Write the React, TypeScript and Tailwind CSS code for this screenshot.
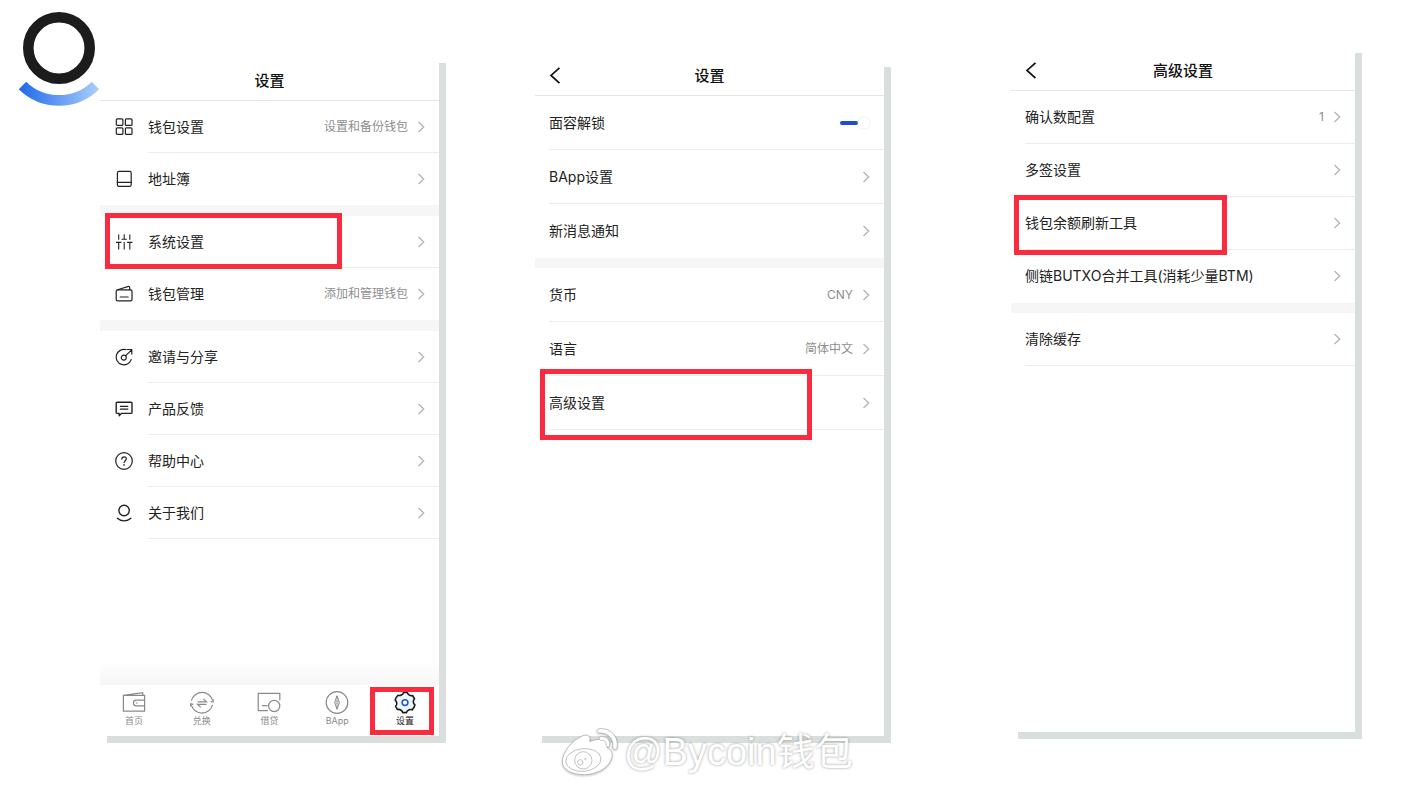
import { useState } from 'react';
import type { ReactNode } from 'react';
import clsx from 'clsx';

interface Row {
  label: string;
  value?: string;
  icon?: ReactNode;
  // position of the red marker around the row
  mark?: string;
}

const Icon = ({ children }: { children: ReactNode }) => (
  <svg
    viewBox="0 0 18 18"
    className="w-[18px] h-[18px] shrink-0 text-[#222]"
    fill="none"
    stroke="currentColor"
    strokeWidth="1.2"
    strokeLinecap="round"
    strokeLinejoin="round"
    aria-hidden="true"
  >
    {children}
  </svg>
);

const GridIcon = () => (
  <Icon>
    <rect x="1.3" y="0.8" width="6.6" height="6.6" rx="1" />
    <rect x="10.4" y="0.8" width="6.6" height="6.6" rx="1" />
    <rect x="1.3" y="9.8" width="6.6" height="6.6" rx="1" />
    <rect x="10.4" y="9.8" width="6.6" height="6.6" rx="1" />
  </Icon>
);

const BookIcon = () => (
  <Icon>
    <rect x="2.4" y="1.4" width="13.8" height="15" rx="1.6" />
    <path d="M2.4 12.4h13.8" />
  </Icon>
);

const SlidersIcon = () => (
  <Icon>
    <g strokeWidth="1.1" strokeLinecap="butt">
      <path d="M3.7 1.4v5.4M1 9.4h5.4M3.7 9.4v7M9.2 1.2v4.6M6.5 6.2h5.4M9.2 9v7.4M14.8 1.4v5.4M12.1 9.4h5.4M14.8 9.4v7" />
    </g>
  </Icon>
);

const WalletIcon = () => (
  <Icon>
    <rect x="1.2" y="4.8" width="15.8" height="11" rx="1.4" />
    <path d="M2.6 4.8l10.8-3.4c.6-.2 1 .1 1.1.6l.5 2.8M5.2 12h8" />
  </Icon>
);

const ShareIcon = () => (
  <Icon>
    <path d="M11 1.7A7.7 7.7 0 1 0 16.2 11.6" />
    <circle cx="8.8" cy="9.6" r="2.5" />
    <path d="M10.7 7.7l5.9-5.9M12.2 1.5h4.6v4.6" />
  </Icon>
);

const FeedbackIcon = () => (
  <Icon>
    <path
      d="M2.2 2.2h13.8c.6 0 1 .4 1 1v9.2c0 .6-.4 1-1 1H6.4L4.2 15.800v-2.400h-2c-.6 0-1-.4-1-1V3.200c0-.6.4-1 1-1z"
      strokeWidth="1.4"
    />
    <path d="M5.4 6.400h7.400M5.400 9.200h7.400" />
  </Icon>
);

const HelpIcon = () => (
  <Icon>
    <circle cx="9" cy="9" r="8.300" />
    <path d="M6.800 7.100c.1-1.400 1-2.200 2.300-2.200s2.200.8 2.200 2c0 1.700-2.200 1.900-2.200 3.700" />
    <circle cx="9.100" cy="12.900" r="0.300" />
  </Icon>
);

const AboutIcon = () => (
  <Icon>
    <circle cx="9.100" cy="6.500" r="5.200" strokeWidth="1.400" />
    <path d="M2.300 14.200c4 3.500 9.600 3.500 13.600 0" strokeWidth="1.400" />
  </Icon>
);

const Chevron = () => (
  <svg viewBox="0 0 8 12" className="w-2 h-3 shrink-0" fill="none" stroke="#b4b4b4" strokeWidth="1.3" aria-hidden="true">
    <path d="M1.5 1l5.2 5-5.2 5" />
  </svg>
);

const TabIcon = ({ children }: { children: ReactNode }) => (
  <svg viewBox="0 0 24 24" className="w-6 h-6" fill="none" stroke="#8a8a8a" strokeWidth="1.2" aria-hidden="true">
    {children}
  </svg>
);

const tabs: { label: string; icon: ReactNode; mark?: string }[] = [
  {
    label: '首页',
    icon: (
      <TabIcon>
        <path d="M1.4 4.4h21.2v15.8H1.4zM1.4 4.4l19.2-2.8.4 2.8M22.6 9.2h-8.4a2.8 2.8 0 0 0 0 5.6h8.4" />
        <path d="M14 12h1.6" />
      </TabIcon>
    ),
  },
  {
    label: '兑换',
    icon: (
      <TabIcon>
        <path d="M1.4 9.7A11 11 0 0 1 22.7 9.7M22.6 13.8A11 11 0 0 1 1.3 13.8" />
        <path d="M20.5 10.5l2.6.6.5-2.6M3.5 13.3l-2.7-.6-.4 2.5M7.5 10.9h9l-3.3-3M16.5 13.4h-9l3.3 3" />
      </TabIcon>
    ),
  },
  {
    label: '借贷',
    icon: (
      <TabIcon>
        <path d="M11 19.6H1.2V2.4h21.6v7.2M5 14.6h5.6" />
        <circle cx="17.2" cy="15" r="5.6" />
      </TabIcon>
    ),
  },
  {
    label: 'BApp',
    icon: (
      <TabIcon>
        <circle cx="12" cy="11.5" r="10.8" />
        <path d="M12 4.8l2.4 6.7-2.4 6.7-2.4-6.7z" strokeWidth="1" />
        <path d="M12 4.8v5.4M12 13v5.2" strokeWidth="0.8" />
        <circle cx="12" cy="11.5" r="1.1" strokeWidth="0.8" />
      </TabIcon>
    ),
  },
  {
    label: '设置',
    mark: 'top-0.5 bottom-px -left-px right-[5px]',
    icon: (
      <TabIcon>
        <path
          d="M9 1.7c1.6 1.7 4.400 1.700 6 0l3.300 1.800c-.6 2.400.9 4.800 3.500 5.200.5 2 .5 4 0 5.600-2.600.4-4.100 2.800-3.500 5.200L15 21.400c-1.600-1.700-4.400-1.700-6 0l-3.300-1.900c.6-2.400-.9-4.800-3.500-5.200-.5-1.600-.5-3.600 0-5.600 2.600-.4 4.100-2.800 3.500-5.200z"
          transform="rotate(30 12 11.6)"
          fill="#eef5ff"
          stroke="#1c1c1c"
          strokeWidth="1.6"
          strokeLinejoin="round"
        />
        <circle cx="12" cy="11.6" r="2.9" fill="#fff" stroke="#2158d0" strokeWidth="1.6" />
      </TabIcon>
    ),
  },
];

const Marker = ({ className }: { className: string }) => (
  <span className={clsx('absolute z-10 border-5 border-[#fb2b3f] pointer-events-none', className)} aria-hidden="true" />
);

const Phone = ({ className, children }: { className: string; children: ReactNode }) => (
  <section className={clsx('relative flex flex-col min-w-0 basis-0 bg-white shadow-[7px_7px_0_#d9dfdd]', className)}>
    {children}
  </section>
);

const TitleBar = ({ title, back, className }: { title: string; back?: boolean; className: string }) => (
  <header className={clsx('relative flex items-center justify-center border-b border-[#e4e4e4]', className)}>
    {back && (
      <button type="button" aria-label="返回" className="absolute left-3.5">
        <svg viewBox="0 0 12 18" className="w-3 h-[18px]" fill="none" stroke="#111" strokeWidth="1.7" aria-hidden="true">
          <path d="M10.5 0.8L2 8.400l8.500 7.800" />
        </svg>
      </button>
    )}
    <h1 className="text-[15px] leading-5 font-medium text-[#111]">{title}</h1>
  </header>
);

const Band = ({ className }: { className: string }) => <div className={clsx('bg-[#f6f6f6]', className)} />;

interface RowListProps {
  rows: Row[];
  height: string;
  // keep the divider under the last row
  closed?: boolean;
}

const RowList = ({ rows, height, closed }: RowListProps) => (
  <ul>
    {rows.map((row, i) => (
      <li key={row.label} className={clsx('relative', height)}>
        <button
          type="button"
          className={clsx('flex items-center w-full h-full text-left', row.icon ? 'pl-[15px] gap-[15px]' : 'pl-3.5')}
        >
          {row.icon}
          <span
            className={clsx(
              'flex flex-1 items-center gap-[9px] h-full pr-3.5 border-b',
              closed || i < rows.length - 1 ? 'border-[#ececec]' : 'border-transparent'
            )}
          >
            <span className="flex-1 text-sm text-[#222] whitespace-nowrap">{row.label}</span>
            {row.value && <span className="text-xs text-[#8e8e8e]">{row.value}</span>}
            <Chevron />
          </span>
        </button>
        {row.mark && <Marker className={row.mark} />}
      </li>
    ))}
  </ul>
);

const walletRows: Row[] = [
  { label: '钱包设置', value: '设置和备份钱包', icon: <GridIcon /> },
  { label: '地址簿', icon: <BookIcon /> },
];

const systemRows: Row[] = [
  { label: '系统设置', icon: <SlidersIcon />, mark: '-top-[3px] -bottom-px left-[5px] right-[97px]' },
  { label: '钱包管理', value: '添加和管理钱包', icon: <WalletIcon /> },
];

const aboutRows: Row[] = [
  { label: '邀请与分享', icon: <ShareIcon /> },
  { label: '产品反馈', icon: <FeedbackIcon /> },
  { label: '帮助中心', icon: <HelpIcon /> },
  { label: '关于我们', icon: <AboutIcon /> },
];

const appRows: Row[] = [{ label: 'BApp设置' }, { label: '新消息通知' }];

const localeRows: Row[] = [
  { label: '货币', value: 'CNY' },
  { label: '语言', value: '简体中文' },
  { label: '高级设置', mark: '-top-[7px] -bottom-2.5 left-[5px] right-[72px]' },
];

const advancedRows: Row[] = [
  { label: '确认数配置', value: '1' },
  { label: '多签设置' },
  { label: '钱包余额刷新工具', mark: '-top-0.5 -bottom-[5px] left-[3px] right-32' },
  { label: '侧链BUTXO合并工具(消耗少量BTM)' },
];

const cacheRows: Row[] = [{ label: '清除缓存' }];

const Logo = () => (
  <svg viewBox="18 10 82 98" className="w-[82px] h-[98px]" fill="none" role="img" aria-label="Bycoin">
    <defs>
      <linearGradient id="smile" x1="19" y1="90" x2="99" y2="90" gradientUnits="userSpaceOnUse">
        <stop offset="0" stopColor="#1f69e8" />
        <stop offset="1" stopColor="#abcffc" />
      </linearGradient>
    </defs>
    <circle cx="59" cy="48" r="30.7" stroke="#1c1c1c" strokeWidth="10.6" />
    <path d="M22.5 85.4A52 52 0 0 0 95.5 85.4" stroke="url(#smile)" strokeWidth="10.6" />
  </svg>
);

const Watermark = () => (
  <div className="absolute left-[560px] top-[726px] flex items-center gap-1 pointer-events-none">
    <svg
      viewBox="90 75 180 156"
      className="w-[60px] h-[52px] drop-shadow-[0_1px_1px_rgba(0,0,0,0.25)]"
      fill="#fff"
      stroke="#a5a5a5"
      strokeWidth="2"
      strokeLinejoin="round"
      aria-hidden="true"
    >
      <path d="M97 182c0-28 30-66 62-78 16-5 24 2 20 18 16-7 36-10 48-4 8 5 8 14 4 22 14 6 18 18 14 32-8 28-44 49-82 49-36 0-66-14-66-39z" />
      <ellipse cx="160" cy="177" rx="53" ry="34" transform="rotate(-6 160 177)" />
      <circle cx="160" cy="178" r="26" />
      <circle cx="151" cy="184" r="8" />
      <circle cx="166" cy="174" r="2" />
      <path d="M206 84c32-6 62 22 55 56-1 8-13 7-13-2 4-24-15-44-40-42-8 0-9-10-2-12z" />
      <path d="M212 107c16-3 30 10 27 26-1 7-12 6-11-1 1-9-6-16-15-14-7 1-8-9-1-11z" />
    </svg>
    <span className="text-[38px] leading-[48px] text-white whitespace-nowrap font-['Liberation_Sans','Noto_Sans_CJK_SC',sans-serif] [text-shadow:0_0_3px_rgba(0,0,0,0.4)]">
      @Bycoin钱包
    </span>
  </div>
);

export default function App() {
  const [faceUnlock, setFaceUnlock] = useState(true);
  const [activeTab, setActiveTab] = useState('设置');

  return (
    <main className="relative flex items-start min-h-screen pr-[63px] overflow-hidden bg-white font-[Inter,'Noto_Sans_CJK_SC',sans-serif]">
      <div className="w-[100px] shrink-0 pl-[18px] pt-2.5">
        <Logo />
      </div>

      <Phone className="grow-[339] mt-14 min-h-[680px]">
        <TitleBar title="设置" className="h-[45px] pt-1.5" />
        <RowList rows={walletRows} height="h-[52px]" />
        <Band className="h-[11px]" />
        <RowList rows={systemRows} height="h-[52px]" />
        <Band className="h-[11px]" />
        <RowList rows={aboutRows} height="h-[52px]" closed />
        <div className="mt-auto h-6 bg-linear-to-b from-white to-[#f6f6f6]" />
        <nav className="grid grid-cols-5 h-[51px]">
          {tabs.map((tab) => (
            <button
              key={tab.label}
              type="button"
              onClick={() => setActiveTab(tab.label)}
              className={clsx(
                'relative flex flex-col items-center pt-1.5 text-[9px] leading-3',
                activeTab === tab.label ? 'text-[#222]' : 'text-[#8a8a8a]'
              )}
            >
              {tab.icon}
              {tab.label}
              {tab.mark && <Marker className={tab.mark} />}
            </button>
          ))}
        </nav>
      </Phone>

      <Phone className="grow-[349] mt-[60px] ml-24 min-h-[676px]">
        <TitleBar title="设置" back className="h-9 pb-1" />
        <div className="pl-3.5">
          <div className="flex items-center justify-between h-[54px] pr-3.5 border-b border-[#ececec]">
            <label htmlFor="face-unlock" className="text-sm text-[#222]">
              面容解锁
            </label>
            <input
              id="face-unlock"
              type="checkbox"
              checked={faceUnlock}
              onChange={(e) => setFaceUnlock(e.target.checked)}
              className="appearance-none flex items-center w-[30px] h-3.5 before:w-[18px] before:h-1 before:rounded-xs before:bg-[#c8c8c8] checked:before:bg-[#1d4fc8] after:w-3 after:h-3 after:rounded-full after:bg-white after:shadow-[0_0_1px_#ccc]"
            />
          </div>
        </div>
        <RowList rows={appRows} height="h-[54px]" />
        <Band className="h-2.5" />
        <RowList rows={localeRows} height="h-[54px]" closed />
      </Phone>

      <Phone className="grow-[344] mt-[46px] ml-[127px] min-h-[686px]">
        <TitleBar title="高级设置" back className="h-[45px] pt-1.5" />
        <RowList rows={advancedRows} height="h-[53px]" />
        <Band className="h-2.5" />
        <RowList rows={cacheRows} height="h-[53px]" closed />
      </Phone>

      <Watermark />
    </main>
  );
}
